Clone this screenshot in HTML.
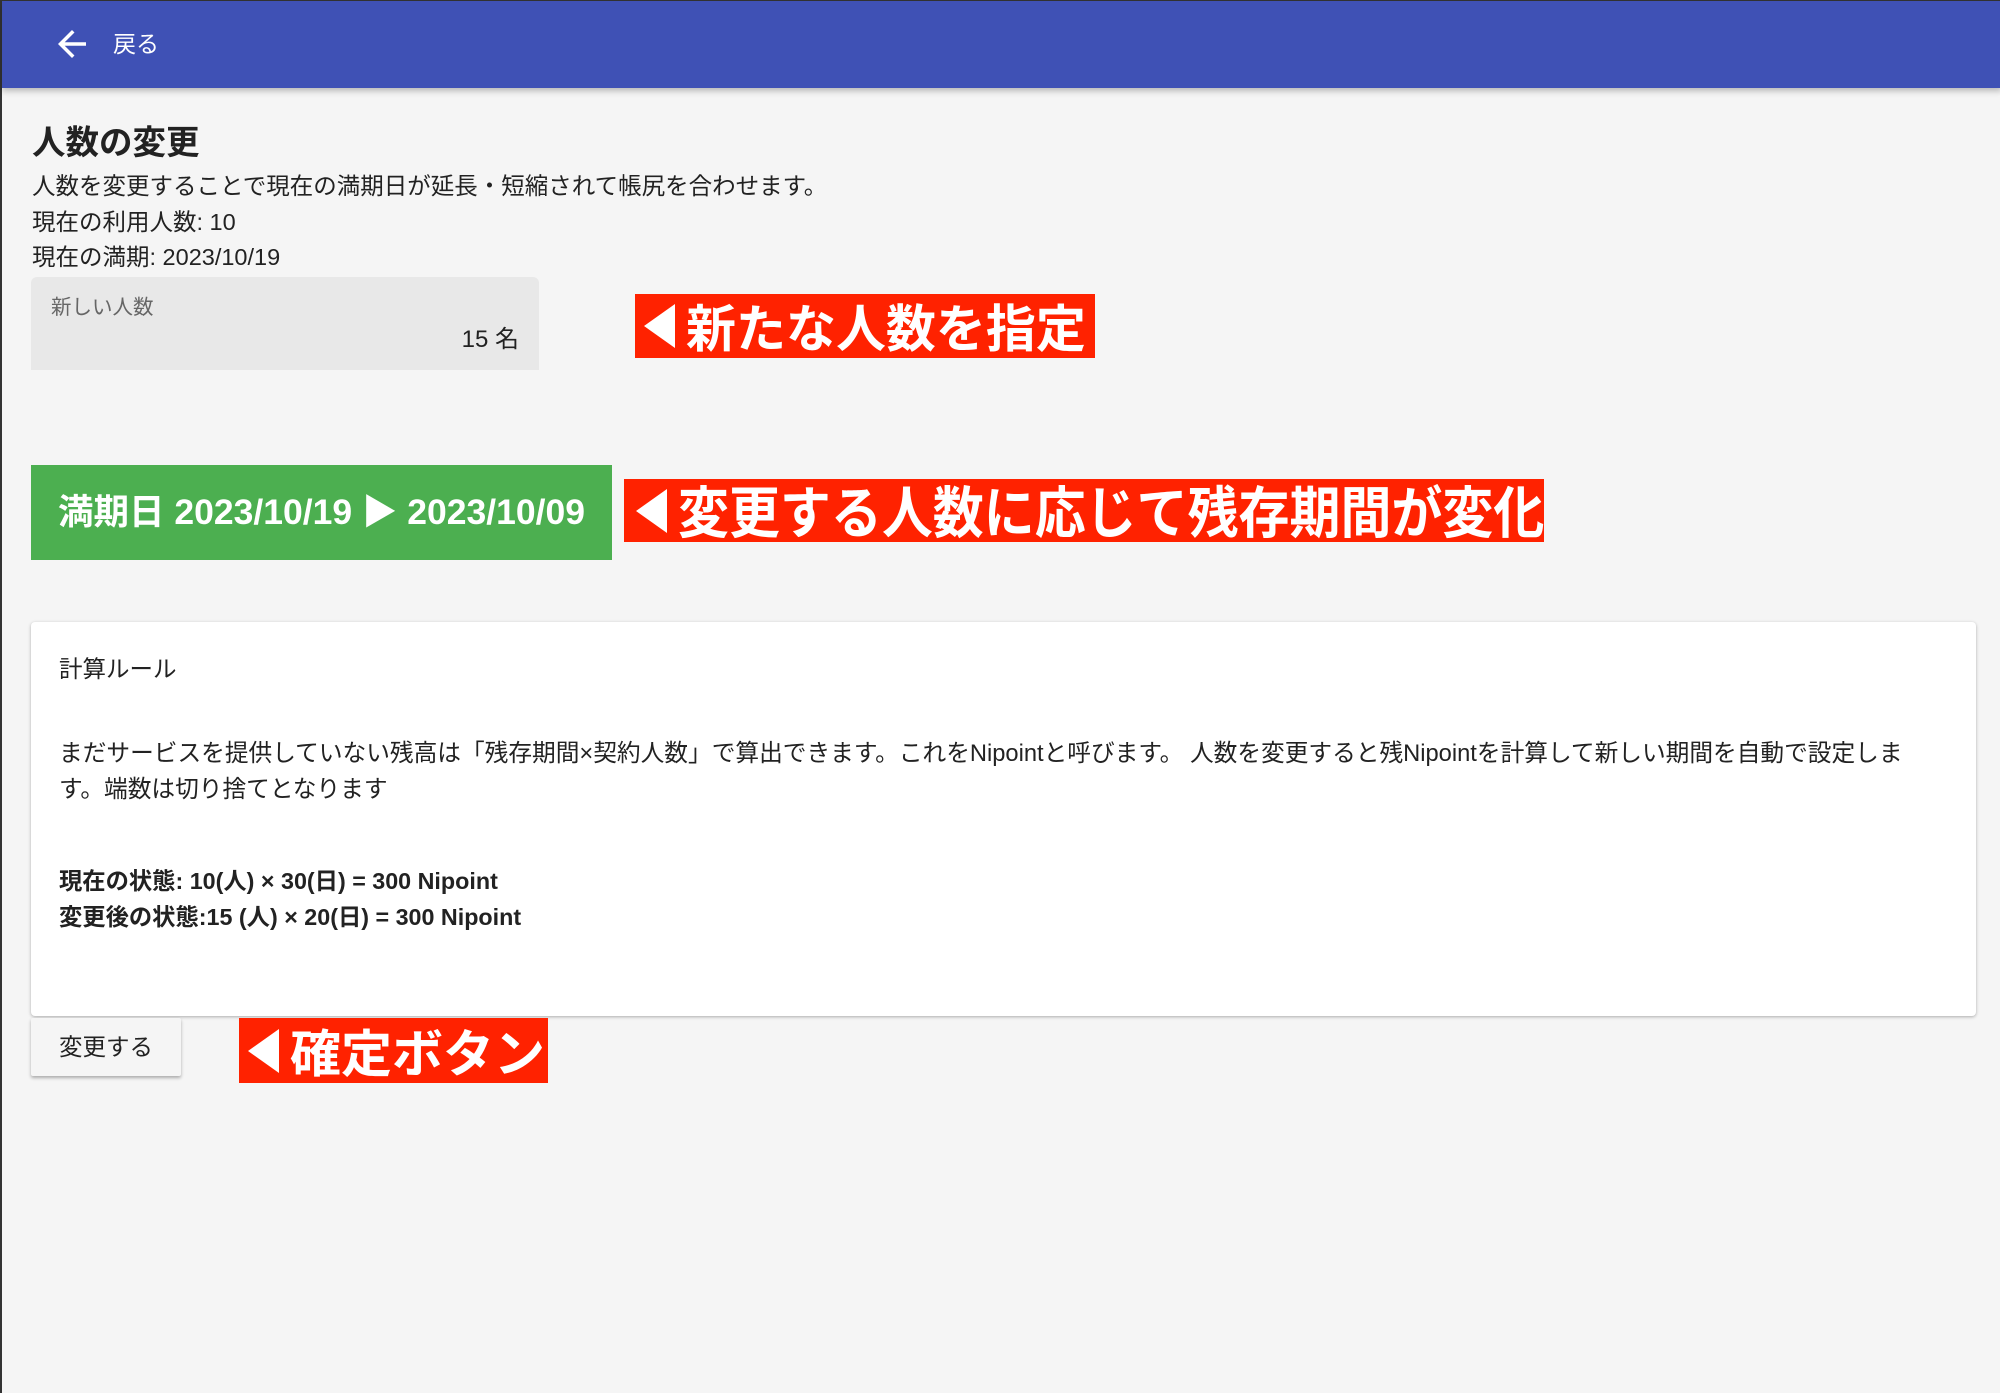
<!DOCTYPE html>
<html><head><meta charset="utf-8"><style>
*{margin:0;padding:0;box-sizing:border-box}
body{width:2000px;height:1393px;background:#f5f5f5;font-family:"Liberation Sans","Noto Sans CJK JP",sans-serif;color:#222;position:relative;overflow:hidden;border-left:2px solid #333;border-top:1px solid #333}
.hdr{position:absolute;left:0;top:0;width:2000px;height:87px;background:#3f51b5;box-shadow:0 3px 6px rgba(0,0,0,.25)}
.hdr span{position:absolute;left:111px;top:24px;font-size:23px;color:#fff}
.abs{position:absolute}
.red{position:absolute;background:#ff2200;color:#fff;font-weight:bold;white-space:nowrap;overflow:hidden}
.tri{position:absolute;width:0;height:0;border-top:22px solid transparent;border-bottom:22px solid transparent;border-right:31px solid #fff}
.red span{position:absolute;letter-spacing:0;transform-origin:0 50%}
</style></head><body>
<div class="hdr"><svg class="abs" style="left:49px;top:22px" width="42" height="42" viewBox="0 0 24 24"><path d="M20 11H7.83l5.59-5.59L12 4l-8 8 8 8 1.41-1.41L7.83 13H20v-2z" fill="#fff"/></svg><span>戻る</span></div>
<div class="abs" style="left:30px;top:114px;font-size:33.5px;font-weight:bold;color:#222">人数の変更</div>
<div class="abs" style="left:30px;top:168px;font-size:23.5px;line-height:35.5px">人数を変更することで現在の満期日が延長・短縮されて帳尻を合わせます。<br>現在の利用人数: 10<br>現在の満期: 2023/10/19</div>
<div class="abs" style="left:29px;top:276px;width:508px;height:93px;background:#e8e8e8;border-radius:6px 6px 0 0"></div>
<div class="abs" style="left:49px;top:289px;font-size:20.5px;color:#666">新しい人数</div>
<div class="abs" style="left:380px;top:318px;width:137px;text-align:right;font-size:24px;color:#222">15 名</div>
<div class="red" style="left:633px;top:293px;width:460px;height:64px"><div class="tri" style="left:9px;top:10px"></div><span style="left:51px;top:-6px;font-size:51px;transform:scaleX(.98)">新たな人数を指定</span></div>
<div class="abs" style="left:29px;top:464px;width:581px;height:95px;background:#4caf50;color:#fff;font-weight:bold;font-size:35.5px;line-height:95px;text-align:center;white-space:nowrap">満期日 2023/10/19 ▶ 2023/10/09</div>
<div class="red" style="left:622px;top:478px;width:920px;height:63px"><div class="tri" style="left:12px;top:10px"></div><span style="left:54px;top:-10px;font-size:56px;transform:scaleX(.91)">変更する人数に応じて残存期間が変化</span></div>
<div class="abs" style="left:29px;top:621px;width:1945px;height:394px;background:#fff;border-radius:4px;box-shadow:0 1px 3px rgba(0,0,0,.3)"></div>
<div class="abs" style="left:57px;top:649px;font-size:23.5px">計算ルール</div>
<div class="abs" style="left:57px;top:735px;font-size:23.7px;line-height:36px;white-space:nowrap">まだサービスを提供していない残高は「残存期間×契約人数」で算出できます。これをNipointと呼びます。 人数を変更すると残Nipointを計算して新しい期間を自動で設定しま<br>す。端数は切り捨てとなります</div>
<div class="abs" style="left:57px;top:862px;font-size:23.3px;line-height:36px;font-weight:bold">現在の状態: 10(人) × 30(日) = 300 Nipoint<br>変更後の状態:15 (人) × 20(日) = 300 Nipoint</div>
<div class="abs" style="left:29px;top:1017px;width:150px;height:58px;background:#f5f5f5;box-shadow:0 2px 3px rgba(0,0,0,.3);border-radius:2px;font-size:23.5px;line-height:58px;text-align:center">変更する</div>
<div class="red" style="left:237px;top:1017px;width:309px;height:65px"><div class="tri" style="left:9px;top:11px"></div><span style="left:51px;top:-5px;font-size:51px">確定ボタン</span></div>
</body></html>
